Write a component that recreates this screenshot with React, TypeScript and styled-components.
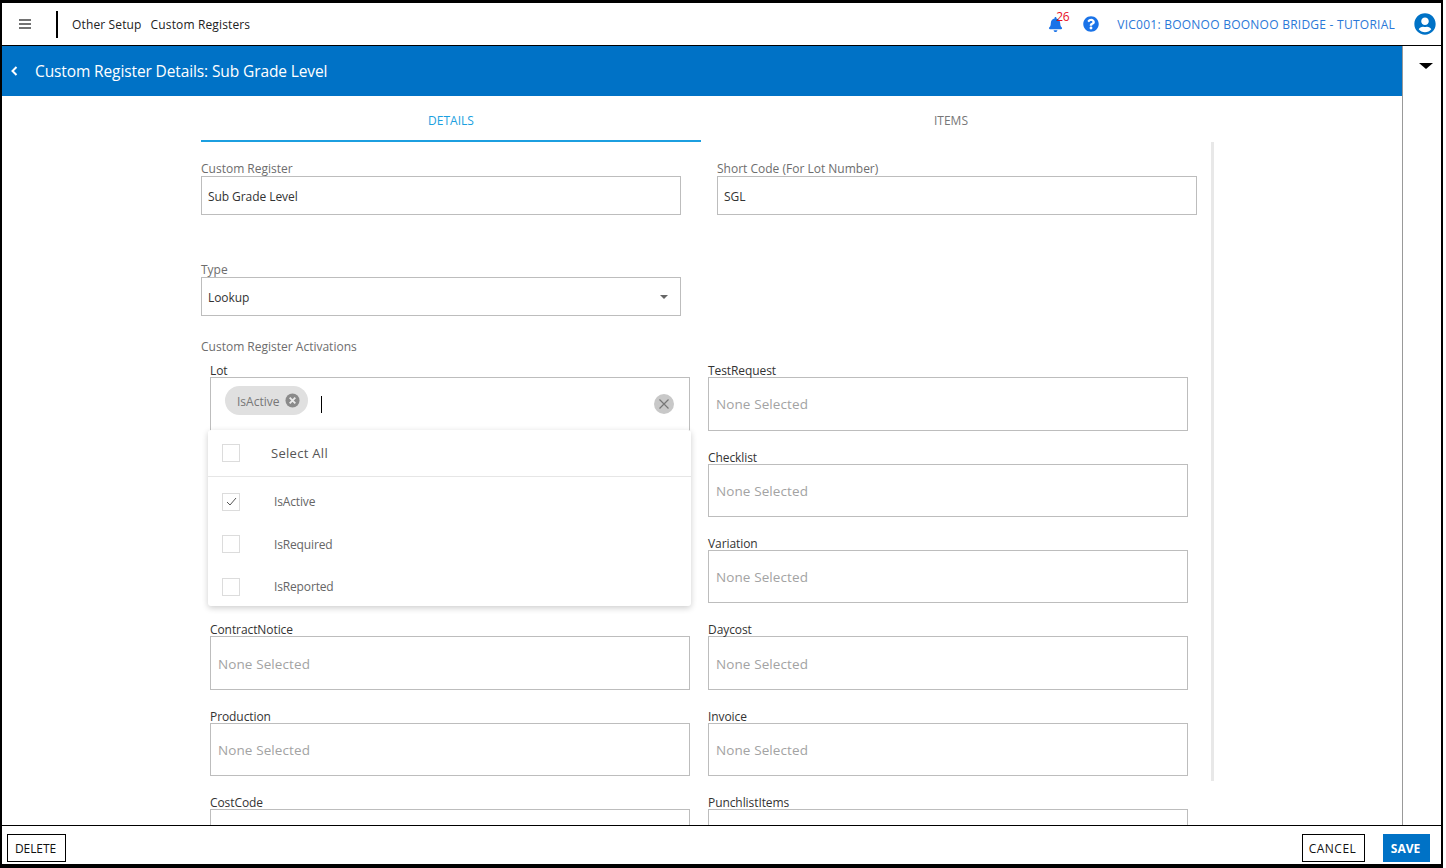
import React from "react";
import styled, { createGlobalStyle } from "styled-components";
import { FaBell, FaQuestionCircle, FaUserCircle } from "react-icons/fa";

const Global = createGlobalStyle`
  html, body { margin: 0; padding: 0; background: #fff; overflow: hidden; }
  * { box-sizing: border-box; }
  body { font-family: "Open Sans", "Noto Sans", "Liberation Sans", sans-serif; }
`;

const Frame = styled.div`
  width: 1443px;
  height: 868px;
  border-style: solid;
  border-color: #000;
  border-width: 3px 2px 4px 2px;
  display: flex;
  flex-direction: column;
  background: #fff;
  overflow: hidden;
`;

const Header = styled.header`
  height: 42px;
  flex: none;
  display: flex;
  align-items: center;
  padding-left: 16px;
  padding-right: 5px;
`;

const Burger = styled.svg`
  width: 14px;
  height: 12px;
  flex: none;
`;

const Divider = styled.span`
  width: 2px;
  height: 27px;
  background: #000;
  margin-left: 24px;
  margin-right: 14px;
  flex: none;
`;

const Crumb = styled.span`
  font-size: 12px;
  letter-spacing: 0.14px;
  color: #222;
  margin-right: 9px;
`;

const HeaderRight = styled.div`
  margin-left: auto;
  display: flex;
  align-items: center;
`;

const BellWrap = styled.span`
  position: relative;
  display: inline-flex;
  color: #1a73e8;
  font-size: 15px;
  margin-right: 20px;
`;

const Badge = styled.span`
  position: absolute;
  left: 8px;
  top: -7px;
  color: #e8101f;
  font-size: 12px;
  font-weight: 400;
  line-height: 14px;
  letter-spacing: -0.3px;
`;

const Help = styled.span`
  display: inline-flex;
  color: #1a73e8;
  font-size: 16px;
  margin-right: 18px;
`;

const Project = styled.span`
  font-size: 12px;
  letter-spacing: 0.25px;
  color: #2a78d8;
  margin-right: 19px;
`;

const Avatar = styled.span`
  display: inline-flex;
  color: #0072c6;
  font-size: 22px;
`;

const Body = styled.div`
  flex: 1;
  min-height: 0;
  display: flex;
  border-top: 1px solid #000;
  border-bottom: 1px solid #000;
`;

const Main = styled.main`
  flex: 1;
  min-width: 0;
  display: flex;
  flex-direction: column;
  overflow: hidden;
`;

const TitleBar = styled.div`
  height: 50px;
  flex: none;
  background: #0072c6;
  color: #fff;
  display: flex;
  align-items: center;
  padding-left: 9px;
`;

const Back = styled.svg`
  width: 7px;
  height: 10px;
  margin-right: 17px;
  flex: none;
`;

const Title = styled.h1`
  margin: 0;
  font-size: 15.5px;
  font-weight: 400;
  letter-spacing: -0.115px;
`;

const Side = styled.aside`
  width: 39px;
  flex: none;
  border-left: 1px solid #999;
  display: flex;
  justify-content: center;
  padding-top: 17px;
  padding-left: 7px;
`;

const Caret = styled.span`
  width: 0;
  height: 0;
  border-left: 7px solid transparent;
  border-right: 7px solid transparent;
  border-top: 6px solid #000;
`;

const Content = styled.div`
  position: relative;
  flex: 1;
  min-height: 0;
  padding-left: 199px;
  width: 1213px;
  overflow: hidden;
`;

const Tabs = styled.div`
  display: flex;
  width: 1000px;
  height: 46px;
`;

const Tab = styled.div<{ $active?: boolean }>`
  width: 500px;
  display: flex;
  align-items: center;
  justify-content: center;
  padding-top: 4px;
  font-size: 12px;
  font-weight: 500;
  letter-spacing: 0;
  color: ${(p) => (p.$active ? "#1c9fe0" : "#777")};
  border-bottom: 2px solid ${(p) => (p.$active ? "#1c9fe0" : "transparent")};
`;

const Thumb = styled.div`
  position: absolute;
  left: 1209px;
  top: 46px;
  width: 3px;
  height: 639px;
  background: #e8e8e8;
`;

const TopFields = styled.div`
  display: grid;
  grid-template-columns: 480px 480px;
  column-gap: 36px;
  padding-top: 19px;
`;

const FieldLabel = styled.label`
  display: block;
  font-size: 12px;
  line-height: 15px;
  letter-spacing: 0;
  color: #6d6d6d;
`;

const TextBox = styled.div`
  height: 39px;
  border: 1px solid #bdbdbd;
  display: flex;
  align-items: center;
  padding: 2px 6px 0;
  font-size: 12px;
  letter-spacing: -0.07px;
  color: #333;
`;

const TypeField = styled.div`
  width: 480px;
  margin-top: 47px;
`;

const Arrow = styled.span`
  margin-left: auto;
  margin-right: 6px;
  margin-top: -2px;
  width: 0;
  height: 0;
  border-left: 4.5px solid transparent;
  border-right: 4.5px solid transparent;
  border-top: 4px solid #666;
`;

const SectionLabel = styled(FieldLabel)`
  margin-top: 23px;
`;

const Grid = styled.div`
  position: relative;
  display: grid;
  grid-template-columns: 480px 480px;
  column-gap: 18px;
  row-gap: 18px;
  margin-left: 9px;
  margin-top: 8.3px;
`;

const Cell = styled.div``;

const CellLabel = styled.div`
  height: 15px;
  padding-top: 1px;
  font-size: 12px;
  line-height: 15px;
  letter-spacing: -0.08px;
  color: #333;
`;

const MultiBox = styled.div`
  height: 53.4px;
  border: 1px solid #bdbdbd;
  display: flex;
  align-items: center;
  padding: 1px 7px 0;
  font-size: 13.5px;
  letter-spacing: 0.1px;
  color: #a3a3a3;
`;

const LotBox = styled(MultiBox)`
  position: relative;
  align-items: flex-start;
  padding: 8px 14px;
`;

const Chip = styled.span`
  height: 29px;
  border-radius: 15px;
  background: #e0e0e0;
  display: inline-flex;
  align-items: center;
  padding: 1px 8px 0 12px;
  font-size: 12px;
  letter-spacing: 0;
  color: #777;
  gap: 6px;
`;

const ChipIcon = styled.svg`
  width: 15px;
  height: 15px;
  flex: none;
  margin-top: -1px;
`;

const CursorBar = styled.span`
  width: 1px;
  height: 17px;
  background: #000;
  margin: 10px 0 0 13px;
`;

const ClearIcon = styled.svg`
  position: absolute;
  right: 15px;
  top: 16px;
  width: 20px;
  height: 20px;
`;

const Dropdown = styled.div`
  position: absolute;
  left: -2px;
  top: 68px;
  width: 483px;
  height: 176px;
  background: #fff;
  border-radius: 3px;
  box-shadow: 0 2px 6px rgba(0, 0, 0, 0.2);
`;

const SelectAllRow = styled.div`
  height: 47px;
  display: flex;
  align-items: center;
  padding-left: 14px;
  border-bottom: 1px solid #e6e6e6;
  font-size: 13px;
  color: #555;
  letter-spacing: 0.3px;
`;

const Option = styled.div`
  height: 42.5px;
  display: flex;
  align-items: center;
  padding-left: 14px;
  font-size: 12px;
  letter-spacing: -0.15px;
  color: #666;
`;

const List = styled.div`
  padding-top: 3px;
`;

const Check = styled.span`
  width: 18px;
  height: 18px;
  border: 1.5px solid #dcdcdc;
  display: inline-flex;
  align-items: center;
  justify-content: center;
  flex: none;
`;

const OptionText = styled.span<{ $offset: number }>`
  margin-left: ${(p) => p.$offset}px;
`;

const Footer = styled.footer`
  height: 38px;
  flex: none;
  display: flex;
  align-items: flex-start;
  padding: 8px 11px 0 5px;
`;

const OutlineBtn = styled.button`
  height: 28px;
  padding: 0 2px 0 0;
  background: #fff;
  border: 1px solid #000;
  font: 500 12px "Open Sans", sans-serif;
  letter-spacing: -0.1px;
  color: #111;
`;

const DeleteBtn = styled(OutlineBtn)`
  width: 59px;
`;

const CancelBtn = styled(OutlineBtn)`
  width: 63px;
  letter-spacing: 0.5px;
`;

const Spacer = styled.div`
  flex: 1;
`;

const SaveBtn = styled.button`
  height: 28px;
  width: 47px;
  margin-left: 18px;
  padding: 0 2px 0 0;
  background: #0072c6;
  border: none;
  color: #fff;
  font: 700 12px "Open Sans", sans-serif;
  letter-spacing: 0;
`;

const rows: [string, string][] = [
  ["", "Checklist"],
  ["", "Variation"],
  ["ContractNotice", "Daycost"],
  ["Production", "Invoice"],
  ["CostCode", "PunchlistItems"],
];

const Multi = ({ label }: { label: string }) => (
  <Cell>
    <CellLabel>{label}</CellLabel>
    <MultiBox>{label === "" || label === "CostCode" || label === "PunchlistItems" ? "" : "None Selected"}</MultiBox>
  </Cell>
);

const Box = ({ checked }: { checked?: boolean }) => (
  <Check>
    {checked && (
      <svg width="11" height="11" viewBox="0 0 11 11" fill="none" stroke="#555" strokeWidth="1">
        <path d="M1 6 L4 9 L10 2" />
      </svg>
    )}
  </Check>
);

export default function App() {
  return (
    <Frame>
      <Global />
      <Header>
        <Burger viewBox="0 0 14 12" stroke="#444" strokeWidth="1.3">
          <path d="M1 2H13M1 6H13M1 10H13" />
        </Burger>
        <Divider />
        <Crumb>Other Setup</Crumb>
        <Crumb>Custom Registers</Crumb>
        <HeaderRight>
          <BellWrap>
            <FaBell />
            <Badge>26</Badge>
          </BellWrap>
          <Help>
            <FaQuestionCircle />
          </Help>
          <Project>VIC001: BOONOO BOONOO BRIDGE - TUTORIAL</Project>
          <Avatar>
            <FaUserCircle />
          </Avatar>
        </HeaderRight>
      </Header>
      <Body>
        <Main>
          <TitleBar>
            <Back viewBox="0 0 7 10" fill="none" stroke="#fff" strokeWidth="2">
              <path d="M5.5 1L1.5 5L5.5 9" />
            </Back>
            <Title>Custom Register Details: Sub Grade Level</Title>
          </TitleBar>
          <Content>
            <Tabs>
              <Tab $active>DETAILS</Tab>
              <Tab>ITEMS</Tab>
            </Tabs>
            <Thumb />
            <TopFields>
              <div>
                <FieldLabel>Custom Register</FieldLabel>
                <TextBox>Sub Grade Level</TextBox>
              </div>
              <div>
                <FieldLabel>Short Code (For Lot Number)</FieldLabel>
                <TextBox>SGL</TextBox>
              </div>
            </TopFields>
            <TypeField>
              <FieldLabel>Type</FieldLabel>
              <TextBox>
                Lookup
                <Arrow />
              </TextBox>
            </TypeField>
            <SectionLabel>Custom Register Activations</SectionLabel>
            <Grid>
              <Cell>
                <CellLabel>Lot</CellLabel>
                <LotBox>
                  <Chip>
                    IsActive
                    <ChipIcon viewBox="0 0 16 16">
                      <circle cx="8" cy="8" r="7.5" fill="#8a8a8a" />
                      <path d="M5 5L11 11M11 5L5 11" stroke="#eaeaea" strokeWidth="2" />
                    </ChipIcon>
                  </Chip>
                  <CursorBar />
                  <ClearIcon viewBox="0 0 20 20">
                    <circle cx="10" cy="10" r="10" fill="#c8c8c8" />
                    <path d="M5.5 5.5L14.5 14.5M14.5 5.5L5.5 14.5" stroke="#777" strokeWidth="1.2" />
                  </ClearIcon>
                </LotBox>
              </Cell>
              <Multi label="TestRequest" />
              {rows.map(([l, r]) => (
                <React.Fragment key={r}>
                  <Multi label={l} />
                  <Multi label={r} />
                </React.Fragment>
              ))}
              <Dropdown>
                <SelectAllRow>
                  <Box />
                  <OptionText $offset={31}>Select All</OptionText>
                </SelectAllRow>
                <List>
                  <Option>
                    <Box checked />
                    <OptionText $offset={34}>IsActive</OptionText>
                  </Option>
                  <Option>
                    <Box />
                    <OptionText $offset={34}>IsRequired</OptionText>
                  </Option>
                  <Option>
                    <Box />
                    <OptionText $offset={34}>IsReported</OptionText>
                  </Option>
                </List>
              </Dropdown>
            </Grid>
          </Content>
        </Main>
        <Side>
          <Caret />
        </Side>
      </Body>
      <Footer>
        <DeleteBtn>DELETE</DeleteBtn>
        <Spacer />
        <CancelBtn>CANCEL</CancelBtn>
        <SaveBtn>SAVE</SaveBtn>
      </Footer>
    </Frame>
  );
}
